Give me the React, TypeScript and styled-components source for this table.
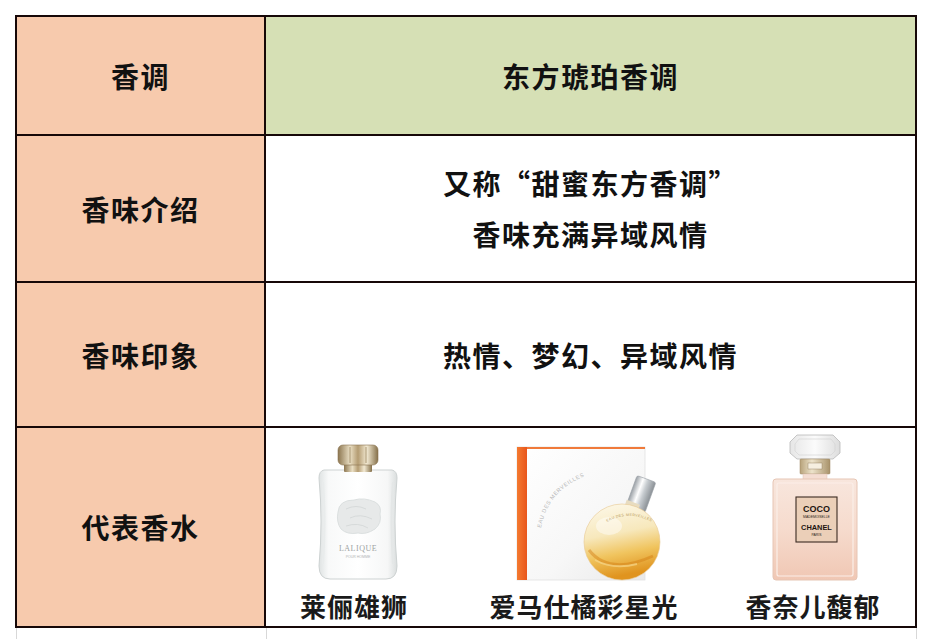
import React from 'react'
import styled, { createGlobalStyle } from 'styled-components'

const GlobalStyle = createGlobalStyle`
  body {
    margin: 0;
    background: #ffffff;
    font-family: "Noto Sans CJK SC", "Liberation Serif", serif;
  }
`

const LaliqueBottle = () => (
  <svg width="100" height="140" viewBox="0 0 100 140">
    <defs>
      <linearGradient id="lqGold" x1="0" x2="1">
        <stop offset="0" stopColor="#8c7650" />
        <stop offset="0.3" stopColor="#eadfc4" />
        <stop offset="0.5" stopColor="#b49c72" />
        <stop offset="0.72" stopColor="#f2e9d2" />
        <stop offset="1" stopColor="#85704a" />
      </linearGradient>
      <linearGradient id="lqGlass" x1="0" x2="1">
        <stop offset="0" stopColor="#dfe3e3" />
        <stop offset="0.12" stopColor="#f8f9f9" />
        <stop offset="0.5" stopColor="#ffffff" />
        <stop offset="0.88" stopColor="#f6f7f7" />
        <stop offset="1" stopColor="#dadede" />
      </linearGradient>
    </defs>
    <g transform="translate(10,0)">
      <path
        d="M10 28 Q5 29 5 36 Q9 80 5 124 Q5 137 16 137 L72 137 Q83 137 83 124 Q79 80 83 36 Q83 29 78 28 Z"
        fill="url(#lqGlass)"
        stroke="#cdd2d2"
        strokeWidth="1"
      />
      <path d="M9 40 Q12 80 9 122" stroke="#e9ecec" strokeWidth="2" fill="none" />
      <path d="M79 40 Q76 80 79 122" stroke="#e4e7e7" strokeWidth="2" fill="none" />
      <rect x="30" y="21" width="28" height="9" rx="1" fill="url(#lqGold)" />
      <rect x="24" y="3" width="40" height="20" rx="5" fill="url(#lqGold)" stroke="#8a7450" strokeWidth="0.6" />
      <line x1="36" y1="5" x2="36" y2="21" stroke="#9a8560" strokeWidth="0.8" />
      <line x1="52" y1="5" x2="52" y2="21" stroke="#9a8560" strokeWidth="0.8" />
      <path
        d="M24 70 Q25 58 40 58 Q50 55 61 60 Q68 64 66 72 Q68 81 61 87 Q52 93 44 91 Q33 93 27 87 Q22 80 24 70 Z"
        fill="#e7e9e9"
        stroke="#d6dada"
        strokeWidth="0.8"
      />
      <path d="M32 67 Q42 62 52 67 M36 76 Q46 71 58 77 M32 84 Q44 80 54 86" stroke="#d2d6d6" strokeWidth="0.8" fill="none" />
      <text x="44" y="109" fontSize="8" fill="#9ea3a3" textAnchor="middle" fontFamily="Liberation Serif, serif" letterSpacing="0.5">
        LALIQUE
      </text>
      <text x="44" y="116" fontSize="3.5" fill="#b0b4b4" textAnchor="middle" fontFamily="Liberation Sans, sans-serif">
        POUR HOMME
      </text>
    </g>
  </svg>
)

const HermesSet = () => (
  <svg width="160" height="140" viewBox="0 0 160 140">
    <defs>
      <linearGradient id="hmBox" x1="0" y1="0" x2="1" y2="1">
        <stop offset="0" stopColor="#ffffff" />
        <stop offset="0.6" stopColor="#f7f7f7" />
        <stop offset="1" stopColor="#e9e9e9" />
      </linearGradient>
      <linearGradient id="hmSide" x1="0" x2="1">
        <stop offset="0" stopColor="#f47a30" />
        <stop offset="1" stopColor="#e8561c" />
      </linearGradient>
      <linearGradient id="hmBall" x1="0" y1="0" x2="0.2" y2="1">
        <stop offset="0" stopColor="#fdf9ec" />
        <stop offset="0.45" stopColor="#f7e8bc" />
        <stop offset="0.72" stopColor="#f0c45e" />
        <stop offset="1" stopColor="#e0941f" />
      </linearGradient>
      <linearGradient id="hmCap" x1="0" x2="1">
        <stop offset="0" stopColor="#9aa0a6" />
        <stop offset="0.35" stopColor="#ffffff" />
        <stop offset="0.6" stopColor="#c7ccd0" />
        <stop offset="1" stopColor="#8b9196" />
      </linearGradient>
      <path id="hmArc" d="M28 86 Q36 40 92 28" />
      <path id="hmBallArc" d="M94 80 Q118 66 146 84" />
    </defs>
    <g transform="translate(9,0)">
      <rect x="4" y="5" width="128" height="133" fill="url(#hmBox)" stroke="#e2e2e2" strokeWidth="0.8" />
      <rect x="4" y="5" width="10" height="133" fill="url(#hmSide)" />
      <rect x="14" y="5" width="118" height="2" fill="#f07a3a" />
      <text fontSize="5.5" fill="#b4b4b4" letterSpacing="0.6" fontFamily="Liberation Sans, sans-serif">
        <textPath href="#hmArc">EAU DES MERVEILLES</textPath>
      </text>
      <g transform="rotate(20 128 52)">
        <rect x="118" y="36" width="20" height="32" rx="2" fill="url(#hmCap)" stroke="#9aa0a6" strokeWidth="0.6" />
      </g>
      <rect x="112" y="60" width="14" height="8" fill="#e8dcc0" transform="rotate(20 119 64)" />
      <circle cx="109" cy="100" r="38" fill="url(#hmBall)" stroke="#e8c890" strokeWidth="0.6" />
      <path d="M76 108 Q96 134 140 114" stroke="#d27c12" strokeWidth="3" fill="none" opacity="0.45" />
      <path d="M82 118 Q100 128 124 122" stroke="#f6d78a" strokeWidth="2" fill="none" opacity="0.7" />
      <ellipse cx="96" cy="84" rx="13" ry="9" fill="#ffffff" opacity="0.45" />
      <text fontSize="3.6" fill="#b89a5a" letterSpacing="0.4" fontFamily="Liberation Sans, sans-serif">
        <textPath href="#hmBallArc">EAU DES MERVEILLES</textPath>
      </text>
    </g>
  </svg>
)

const ChanelBottle = () => (
  <svg width="100" height="150" viewBox="0 0 100 150">
    <defs>
      <linearGradient id="chBody" x1="0" y1="0" x2="0" y2="1">
        <stop offset="0" stopColor="#f8e6dd" />
        <stop offset="0.5" stopColor="#f6dbcd" />
        <stop offset="1" stopColor="#f0c7b4" />
      </linearGradient>
      <linearGradient id="chGold" x1="0" x2="1">
        <stop offset="0" stopColor="#b7a27a" />
        <stop offset="0.4" stopColor="#ede3cb" />
        <stop offset="1" stopColor="#a8926a" />
      </linearGradient>
      <linearGradient id="chGlass" x1="0" x2="1">
        <stop offset="0" stopColor="#e6e6e6" />
        <stop offset="0.5" stopColor="#fbfbfb" />
        <stop offset="1" stopColor="#dddddd" />
      </linearGradient>
    </defs>
    <g transform="translate(2,0)">
      <path d="M32 3 L68 3 L75 10 L75 21 L68 27 L32 27 L25 21 L25 10 Z" fill="url(#chGlass)" stroke="#b9b9b9" strokeWidth="0.8" />
      <path d="M34 7 L66 7 L70 12 L70 19 L66 23 L34 23 L30 19 L30 12 Z" fill="none" stroke="#d2d2d2" strokeWidth="0.6" />
      <rect x="35" y="27" width="30" height="15" rx="1" fill="url(#chGold)" stroke="#9c8760" strokeWidth="0.5" />
      <rect x="43" y="31" width="14" height="6" fill="#f6efe0" stroke="#8a7654" strokeWidth="0.4" />
      <rect x="38" y="42" width="24" height="6" fill="#f4ddd2" stroke="#e0c2b2" strokeWidth="0.5" />
      <rect x="8" y="47" width="84" height="101" rx="3" fill="url(#chBody)" stroke="#e6c5b4" strokeWidth="1" />
      <rect x="12" y="51" width="76" height="93" rx="2" fill="none" stroke="#fbeee8" strokeWidth="1.2" />
      <rect x="31" y="65" width="41" height="45" fill="#ebcfb8" stroke="#3b2b22" strokeWidth="1.1" />
      <text x="51.5" y="80" fontSize="9" fontWeight="700" fill="#1e1510" textAnchor="middle" fontFamily="Liberation Sans, sans-serif">
        COCO
      </text>
      <text x="51.5" y="86" fontSize="3.4" fill="#2a1e16" textAnchor="middle" fontFamily="Liberation Sans, sans-serif">
        MADEMOISELLE
      </text>
      <text x="51.5" y="98" fontSize="7.4" fontWeight="700" fill="#1e1510" textAnchor="middle" fontFamily="Liberation Sans, sans-serif">
        CHANEL
      </text>
      <text x="51.5" y="104" fontSize="3.4" fill="#2a1e16" textAnchor="middle" fontFamily="Liberation Sans, sans-serif">
        PARIS
      </text>
    </g>
  </svg>
)

interface Product {
  name: string
  picture: React.ReactNode
}

const products: Product[] = [
  { name: '莱俪雄狮', picture: <LaliqueBottle /> },
  { name: '爱马仕橘彩星光', picture: <HermesSet /> },
  { name: '香奈儿馥郁', picture: <ChanelBottle /> },
]

function App() {
  return (
    <Page>
      <GlobalStyle />
      <Table>
        <Cell $bg="#f7caad">
          <Heading>香调</Heading>
        </Cell>
        <Cell $bg="#d6e0b5">
          <Heading>东方琥珀香调</Heading>
        </Cell>

        <Cell $bg="#f7caad">
          <Heading>香味介绍</Heading>
        </Cell>
        <Cell $bg="#ffffff">
          <Heading $lineGap>又称“甜蜜东方香调”</Heading>
          <Heading $lineGap>香味充满异域风情</Heading>
        </Cell>

        <Cell $bg="#f7caad">
          <Heading>香味印象</Heading>
        </Cell>
        <Cell $bg="#ffffff">
          <Heading>热情、梦幻、异域风情</Heading>
        </Cell>

        <Cell $bg="#f7caad">
          <Heading>代表香水</Heading>
        </Cell>
        <Cell $bg="#ffffff">
          <ProductRow>
            {products.map((item) => (
              <ProductItem key={item.name}>
                <PictureSlot>{item.picture}</PictureSlot>
                <ProductName>{item.name}</ProductName>
              </ProductItem>
            ))}
          </ProductRow>
        </Cell>
      </Table>
      <NextRow>
        <NextCell />
        <NextCell />
      </NextRow>
    </Page>
  )
}

const Page = styled.div`
  padding: 15px 0 0 15px;
`

const Table = styled.div`
  display: grid;
  width: 902px;
  box-sizing: border-box;
  grid-template-columns: 247px 649px;
  grid-template-rows: 117px 145px 143px 198px;
  gap: 2px;
  padding: 2px;
  background: #160808;
`

const Cell = styled.div<{ $bg: string }>`
  display: flex;
  flex-direction: column;
  align-items: center;
  justify-content: center;
  background: ${(p) => p.$bg};
`

const Heading = styled.div<{ $lineGap?: boolean }>`
  font-size: 28px;
  font-weight: 700;
  letter-spacing: 1.5px;
  line-height: ${(p) => (p.$lineGap ? '51px' : '36px')};
  color: #111111;
`

const ProductRow = styled.div`
  display: grid;
  grid-template-columns: 176px 284px 174px;
  align-self: stretch;
  height: 100%;
  box-sizing: border-box;
  padding-top: 4px;
`

const ProductItem = styled.div`
  display: flex;
  flex-direction: column;
  align-items: center;
`

const PictureSlot = styled.div`
  height: 150px;
  display: flex;
  align-items: flex-end;
  justify-content: center;
`

const ProductName = styled.div`
  margin-top: 8px;
  font-size: 26px;
  font-weight: 700;
  letter-spacing: 1px;
  line-height: 31px;
  color: #1a1a1a;
`

const NextRow = styled.div`
  display: grid;
  grid-template-columns: 250px 651px;
  width: 902px;
  height: 11px;
  margin-left: 1px;
`

const NextCell = styled.div`
  border-left: 1px solid #d8d8d8;
  &:last-child {
    border-right: 1px solid #d8d8d8;
  }
`

export default App
